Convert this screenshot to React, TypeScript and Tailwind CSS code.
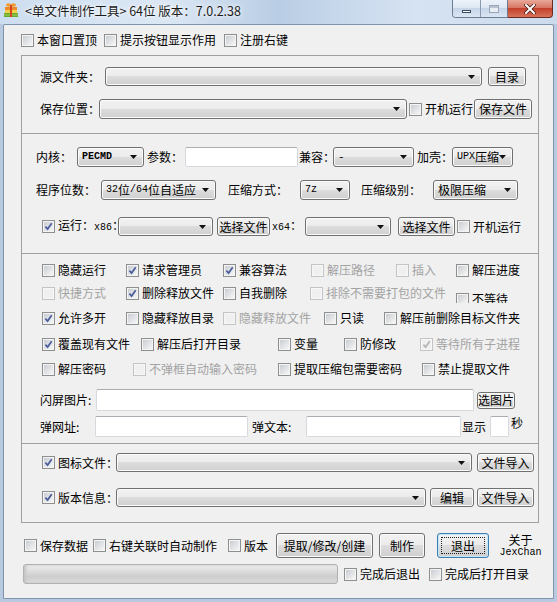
import React from "react";

const face = "bg-[linear-gradient(#f2f2f2,#ebebeb_50%,#dddddd_50%,#cfcfcf)]";
const mono = "font-['Liberation_Mono',monospace]";

function Check({ checked = false, disabled = false }: { checked?: boolean; disabled?: boolean }) {
  return (
    <span
      className={`relative flex h-[13px] w-[13px] shrink-0 items-center justify-center border ${
        disabled ? "border-[#c4c4c4] bg-[#f7f7f7]" : "border-[#8e8f8f] bg-[#f4f4f4]"
      }`}
    >
      <span className={`h-[9px] w-[9px] ${disabled ? "bg-[#f0f0f0]" : "bg-[linear-gradient(135deg,#c9cdd3,#f6f6f6)]"}`} />
      {checked && (
        <svg className="absolute left-0 top-0" width="11" height="11" viewBox="0 0 11 11">
          <path d="M2.4 5.6L4.6 8.1L8.7 2.3" fill="none" stroke={disabled ? "#b4b4b4" : "#4a5d9c"} strokeWidth="1.7" />
        </svg>
      )}
    </span>
  );
}

function CB({
  label,
  checked,
  disabled,
  className = "",
}: {
  label: string;
  checked?: boolean;
  disabled?: boolean;
  className?: string;
}) {
  return (
    <div className={`flex h-[16px] shrink-0 items-center gap-[3px] whitespace-nowrap ${className}`}>
      <Check checked={checked} disabled={disabled} />
      <span className={disabled ? "text-[#a3a3a3]" : ""}>{label}</span>
    </div>
  );
}

function Combo({ className = "", children }: { className?: string; children?: React.ReactNode }) {
  return (
    <div
      className={`relative flex shrink-0 items-center whitespace-nowrap rounded-[3px] border border-[#707070] pl-[4px] shadow-[inset_0_0_0_1px_#fbfbfb] ${face} ${className}`}
    >
      {children}
      <svg className="absolute right-[6px] top-1/2 -mt-[2px]" width="7" height="4" viewBox="0 0 7 4">
        <path d="M0 0H7L3.5 4Z" fill="#111" />
      </svg>
    </div>
  );
}

function Btn({ className = "", children }: { className?: string; children?: React.ReactNode }) {
  return (
    <button
      type="button"
      className={`flex shrink-0 items-center justify-center whitespace-nowrap rounded-[3px] border border-[#707070] text-[12px] shadow-[inset_0_0_0_1px_#fbfbfb] ${face} ${className}`}
    >
      {children}
    </button>
  );
}

function Field({ className = "" }: { className?: string }) {
  return <div className={`shrink-0 rounded-[2px] border border-[#d6dade] border-t-[#abadb3] bg-white ${className}`} />;
}

function AppIcon() {
  return (
    <svg width="16" height="16" viewBox="0 0 16 16">
      <rect x="1" y="11" width="14" height="4" fill="#6aa92e" />
      <rect x="1" y="12.5" width="14" height="1" fill="#9fd05a" />
      <rect x="2" y="8" width="12" height="3" fill="#f3cf4a" />
      <rect x="2" y="5" width="12" height="3" fill="#ee8a2b" />
      <rect x="7" y="5" width="2" height="10" fill="#d5451c" />
      <ellipse cx="5.5" cy="3" rx="2.5" ry="1.8" fill="#f39a2e" />
      <ellipse cx="10.5" cy="3" rx="2.5" ry="1.8" fill="#f39a2e" />
      <circle cx="8" cy="4" r="1.2" fill="#d5451c" />
    </svg>
  );
}

function TitleBar() {
  return (
    <div className="flex h-[24px] shrink-0 items-start bg-[linear-gradient(90deg,#cddef0_0%,#dbe7f4_30%,#b9cde4_50%,#c6d7eb_60%,#d6e3f2_75%,#cbdbee_100%)]">
      <div className="ml-[3px] mt-[2px]">
        <AppIcon />
      </div>
      <div className="ml-[6px] mt-[3px] whitespace-nowrap text-[12.5px] leading-[15px] text-[#1b1b1b] [text-shadow:0_0_6px_#fff,0_0_3px_#fff]">
        &lt;单文件制作工具&gt; 64位 版本：7.0.2.38
      </div>
      <div className="ml-auto mr-[4px] flex h-[18px]">
        <div className="flex overflow-hidden rounded-bl-[4px] border border-t-0 border-[#6b7c93]">
          <div className="flex w-[27px] items-end justify-center bg-[linear-gradient(#eef3fa,#dbe5f2_50%,#c6d5e8_50%,#dbe6f3)] pb-[4px]">
            <span className="h-[3px] w-[9px] border border-[#3b4b62] bg-white" />
          </div>
          <div className="flex w-[27px] items-center justify-center border-l border-[#8b9ab0] bg-[linear-gradient(#eef3fa,#dbe5f2_50%,#c6d5e8_50%,#dbe6f3)]">
            <span className="h-[8px] w-[10px] border border-[#9aa7b8] bg-[#e9eef5] shadow-[inset_0_2px_0_#b8c3d2]" />
          </div>
        </div>
        <div className="flex w-[45px] items-center justify-center rounded-br-[4px] border border-l-0 border-t-0 border-[#6b2a22] bg-[linear-gradient(#e9a898,#d6705f_50%,#c2402c_50%,#d87359)]">
          <svg width="12" height="10" viewBox="0 0 12 10">
            <path d="M2 1L10 9M10 1L2 9" stroke="#4a1c16" strokeWidth="3.6" strokeLinecap="square" />
            <path d="M2 1L10 9M10 1L2 9" stroke="#fff" strokeWidth="2" strokeLinecap="square" />
          </svg>
        </div>
      </div>
    </div>
  );
}

export default function App() {
  return (
    <div className="flex h-[602px] w-[557px] flex-col overflow-hidden bg-[#b7cae0] font-['Noto_Sans_CJK_SC',sans-serif] text-[12px] leading-[14px] text-black">
      <TitleBar />
      <div className="flex flex-1 px-[3px] pb-[3px]">
        <div className="flex flex-1 flex-col rounded-t-[2px] border border-[#7f93ab] bg-[#f0f0f0]">
          {/* top options */}
          <div className="ml-[17px] mt-[7px] flex h-[16px] items-center">
            <CB label="本窗口置顶" className="w-[83px]" />
            <CB label="提示按钮显示作用" className="w-[120px]" />
            <CB label="注册右键" />
          </div>

          {/* main panel */}
          <div className="ml-[17px] mt-[7px] w-[518px] border-x border-[#a0a0a0]">
            {/* source / save */}
            <div className="border-t border-[#a0a0a0] pb-[14px] pl-[18px] pt-[11px]">
              <div className="flex h-[19px] items-center whitespace-nowrap">
                <span className="w-[65px] shrink-0">源文件夹：</span>
                <Combo className="h-[19px] w-[377px]" />
                <Btn className="ml-[6px] h-[19px] w-[38px]">目录</Btn>
              </div>
              <div className="mt-[13px] flex h-[20px] items-center whitespace-nowrap">
                <span className="w-[59px] shrink-0">保存位置：</span>
                <Combo className="h-[20px] w-[308px]" />
                <CB label="开机运行" className="ml-[2px]" />
                <Btn className="ml-[1px] h-[20px] w-[58px]">保存文件</Btn>
              </div>
            </div>

            {/* core settings */}
            <div className="border-t border-[#a0a0a0] pb-[17px] pl-[14px] pt-[13px]">
              <div className="flex h-[20px] items-center whitespace-nowrap">
                <span className="w-[41px] shrink-0">内核：</span>
                <Combo className="h-[20px] w-[67px]">
                  <span className={`${mono} text-[10px] font-bold`}>PECMD</span>
                </Combo>
                <span className="ml-[3px] w-[38px] shrink-0">参数：</span>
                <Field className="h-[20px] w-[113px]" />
                <span className="ml-[1px] w-[34px] shrink-0">兼容：</span>
                <Combo className="h-[20px] w-[81px]">
                  <span className={`${mono} text-[11px]`}>-</span>
                </Combo>
                <span className="ml-[3px] w-[35px] shrink-0">加壳：</span>
                <Combo className="h-[20px] w-[61px]">
                  <span className={`${mono} text-[10px]`}>UPX</span>
                  <span>压缩</span>
                </Combo>
              </div>
              <div className="mt-[13px] flex h-[20px] items-center whitespace-nowrap">
                <span className="w-[65px] shrink-0">程序位数：</span>
                <Combo className="h-[20px] w-[115px]">
                  <span className={`${mono} text-[10px]`}>32</span>
                  <span>位</span>
                  <span className={`${mono} text-[10px]`}>/64</span>
                  <span>位自适应</span>
                </Combo>
                <span className="ml-[12px] w-[72px] shrink-0">压缩方式：</span>
                <Combo className="h-[20px] w-[50px]">
                  <span className={`${mono} text-[10px]`}>7z</span>
                </Combo>
                <span className="ml-[11px] w-[72px] shrink-0">压缩级别：</span>
                <Combo className="h-[20px] w-[85px]">
                  <span>极限压缩</span>
                </Combo>
              </div>
              <div className="mt-[17px] flex h-[19px] items-center whitespace-nowrap">
                <span className="ml-[6px]">
                  <Check checked />
                </span>
                <span className="ml-[3px] w-[60px] shrink-0">
                  运行：<span className={`${mono} text-[10px]`}>x86</span>：
                </span>
                <Combo className="h-[19px] w-[95px]" />
                <Btn className="ml-[4px] h-[19px] w-[53px]">选择文件</Btn>
                <span className="ml-[2px] w-[33px] shrink-0">
                  <span className={`${mono} text-[10px]`}>x64</span>：
                </span>
                <Combo className="h-[19px] w-[86px]" />
                <Btn className="ml-[7px] h-[19px] w-[57px]">选择文件</Btn>
                <CB label="开机运行" className="ml-[2px]" />
              </div>
            </div>

            {/* options grid */}
            <div className="border-t border-[#a0a0a0] pb-[6px] pl-[18px] pt-[8px]">
              <div className="ml-[2px] flex h-[16px] items-center">
                <CB label="隐藏运行" className="w-[84px]" />
                <CB label="请求管理员" checked className="w-[97px]" />
                <CB label="兼容算法" checked className="w-[88px]" />
                <CB label="解压路径" disabled className="w-[85px]" />
                <CB label="插入" disabled className="w-[60px]" />
                <CB label="解压进度" />
              </div>
              <div className="ml-[2px] mt-[7px] flex h-[16px] items-start">
                <CB label="快捷方式" disabled className="w-[84px]" />
                <CB label="删除释放文件" checked className="w-[97px]" />
                <CB label="自我删除" className="w-[87px]" />
                <CB label="排除不需要打包的文件" disabled className="w-[146px]" />
                <div className="mt-[6px] h-[12px] overflow-hidden">
                  <CB label="不等待" />
                </div>
              </div>
              <div className="ml-[2px] mt-[9px] flex h-[16px] items-center">
                <CB label="允许多开" checked className="w-[84px]" />
                <CB label="隐藏释放目录" className="w-[97px]" />
                <CB label="隐藏释放文件" disabled className="w-[101px]" />
                <CB label="只读" className="w-[60px]" />
                <CB label="解压前删除目标文件夹" />
              </div>
              <div className="ml-[2px] mt-[10px] flex h-[16px] items-center">
                <CB label="覆盖现有文件" checked className="w-[99px]" />
                <CB label="解压后打开目录" className="w-[137px]" />
                <CB label="变量" className="w-[66px]" />
                <CB label="防修改" className="w-[76px]" />
                <CB label="等待所有子进程" checked disabled />
              </div>
              <div className="ml-[2px] mt-[9px] flex h-[16px] items-center">
                <CB label="解压密码" className="w-[91px]" />
                <CB label="不弹框自动输入密码" disabled className="w-[145px]" />
                <CB label="提取压缩包需要密码" className="w-[144px]" />
                <CB label="禁止提取文件" />
              </div>
              <div className="mt-[12px] flex h-[22px] items-center whitespace-nowrap">
                <span className="w-[56px] shrink-0">闪屏图片:</span>
                <Field className="h-[22px] w-[378px]" />
                <Btn className="ml-[3px] h-[17px] w-[38px]">选图片</Btn>
              </div>
              <div className="mt-[5px] flex h-[21px] items-center whitespace-nowrap">
                <span className="w-[55px] shrink-0">弹网址:</span>
                <Field className="h-[21px] w-[153px]" />
                <span className="ml-[4px] w-[54px] shrink-0">弹文本:</span>
                <Field className="h-[21px] w-[155px]" />
                <span className="ml-[1px] w-[28px] shrink-0">显示</span>
                <Field className="h-[21px] w-[19px]" />
                <span className="ml-[2px] self-start">秒</span>
              </div>
            </div>

            {/* icon / version */}
            <div className="border-y border-[#a0a0a0] pb-[15px] pl-[20px] pt-[9px]">
              <div className="flex h-[19px] items-center whitespace-nowrap">
                <Check checked />
                <span className="ml-[3px] w-[58px] shrink-0">图标文件：</span>
                <Combo className="h-[19px] w-[356px]" />
                <Btn className="ml-[5px] h-[19px] w-[57px]">文件导入</Btn>
              </div>
              <div className="mt-[16px] flex h-[19px] items-center whitespace-nowrap">
                <Check checked />
                <span className="ml-[3px] w-[58px] shrink-0">版本信息：</span>
                <Combo className="h-[19px] w-[310px]" />
                <Btn className="ml-[4px] h-[19px] w-[44px]">编辑</Btn>
                <Btn className="ml-[3px] h-[19px] w-[57px]">文件导入</Btn>
              </div>
            </div>
          </div>

          {/* bottom actions */}
          <div className="ml-[20px] mt-[10px] flex h-[25px] items-center">
            <CB label="保存数据" className="w-[69px]" />
            <CB label="右键关联时自动制作" className="w-[135px]" />
            <CB label="版本" className="w-[48px]" />
            <Btn className="h-[25px] w-[97px]">提取/修改/创建</Btn>
            <Btn className="ml-[6px] h-[25px] w-[46px]">制作</Btn>
            <button
              type="button"
              className={`ml-[12px] flex h-[25px] w-[52px] shrink-0 items-center justify-center rounded-[3px] border border-[#3c7fb1] shadow-[inset_0_0_0_1px_#bfe6fb] ${face}`}
            >
              <span className="flex h-[17px] w-[44px] items-center justify-center border border-dotted border-[#222]">退出</span>
            </button>
            <div className="ml-[10px] flex w-[43px] flex-col items-center">
              <span className="leading-[14px]">关于</span>
              <span className={`${mono} text-[10px] leading-[12px]`}>JexChan</span>
            </div>
          </div>
          <div className="ml-[19px] mt-[6px] flex h-[20px] items-center">
            <div className="h-[20px] w-[315px] shrink-0 rounded-[3px] border border-[#b2b2b2] bg-[linear-gradient(#efefef,#dcdcdc_35%,#cdcdcd_65%,#dedede)] shadow-[inset_2px_0_3px_#c4c4c4]" />
            <CB label="完成后退出" className="ml-[6px] w-[85px]" />
            <CB label="完成后打开目录" />
          </div>
        </div>
      </div>
    </div>
  );
}
